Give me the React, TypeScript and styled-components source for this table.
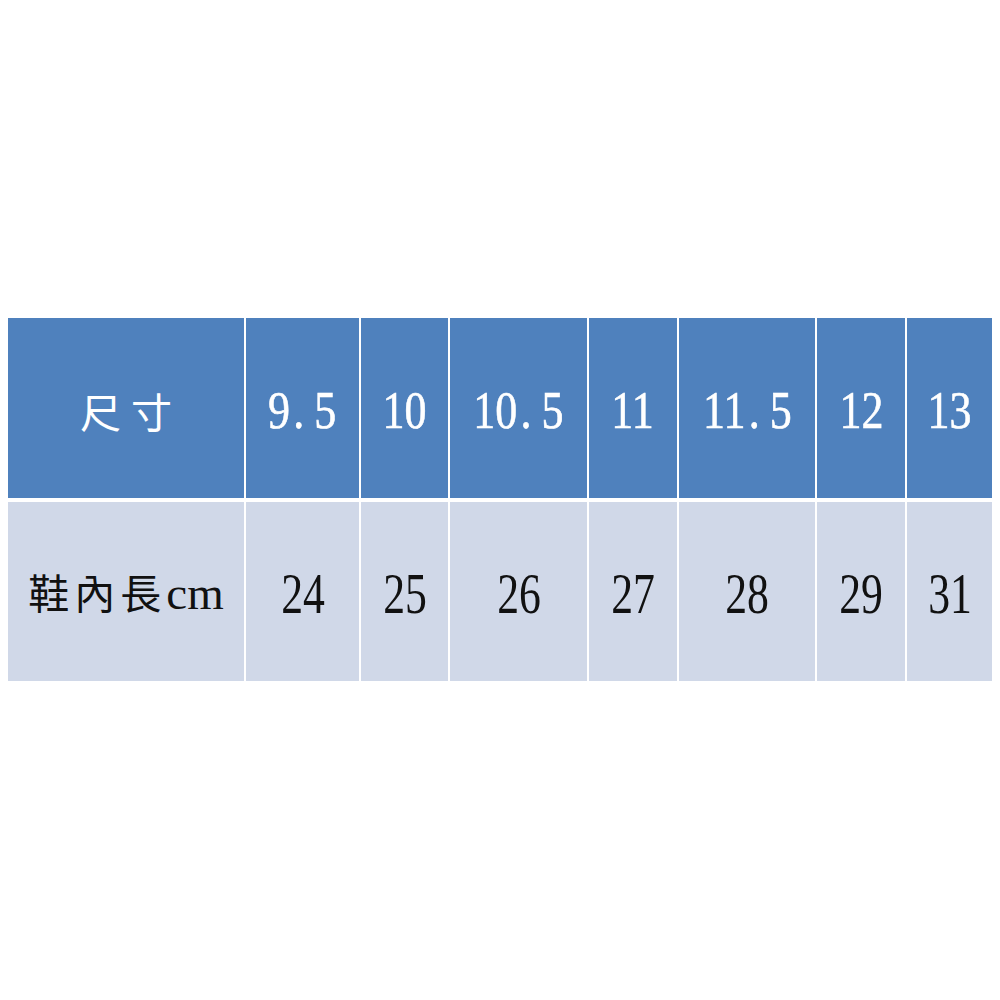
import styled, { createGlobalStyle } from "styled-components";

const GlobalStyle = createGlobalStyle`
  html, body {
    margin: 0;
    padding: 0;
    background: #ffffff;
  }
`;

const Page = styled.div`
  width: 1000px;
  height: 1000px;
  padding: 318px 0 0 8px;
  box-sizing: border-box;
  background: #ffffff;
`;

const SizeGrid = styled.div`
  display: grid;
  grid-template-columns: 236px 113px 87px 137px 88px 136px 88px 85px;
  grid-template-rows: 180px 179px;
  column-gap: 2px;
  row-gap: 4px;
  width: 984px;
`;

interface CellProps {
  $head?: boolean;
}

const Cell = styled.div<CellProps>`
  display: flex;
  align-items: center;
  justify-content: center;
  background: ${(p) => (p.$head ? "#4f81bd" : "#d0d8e8")};
  color: ${(p) => (p.$head ? "#ffffff" : "#111111")};
  font-family: "Liberation Serif", "Noto Sans CJK TC", serif;
  line-height: 1;
  padding-top: 4px;
  white-space: nowrap;
`;

const Digits = styled.span<CellProps>`
  display: inline-block;
  font-size: ${(p) => (p.$head ? "53px" : "56px")};
  transform: scaleX(${(p) => (p.$head ? 0.83 : 0.78)});
  -webkit-text-stroke: ${(p) => (p.$head ? "0.6px #ffffff" : "0")};
`;

const Label = styled.span<CellProps>`
  font-family: "Noto Sans CJK TC", serif;
  font-size: 41px;
  letter-spacing: ${(p) => (p.$head ? "10px" : "5px")};
  margin-right: ${(p) => (p.$head ? "-10px" : "0")};
`;

const Unit = styled.span`
  font-family: "Liberation Serif", serif;
  font-size: 47px;
  letter-spacing: 0;
`;

const Dot = styled.span`
  display: inline-block;
  margin: 0 12px 0 4px;
`;

const sizes = ["9.5", "10", "10.5", "11", "11.5", "12", "13"];
const lengths = ["24", "25", "26", "27", "28", "29", "31"];

function SizeValue({ value }: { value: string }) {
  const [whole, half] = value.split(".");
  if (half === undefined) return <>{whole}</>;
  return (
    <>
      {whole}
      <Dot>.</Dot>
      {half}
    </>
  );
}

export default function App() {
  return (
    <>
      <GlobalStyle />
      <Page>
        <SizeGrid>
          <Cell $head>
            <Label $head>尺寸</Label>
          </Cell>
          {sizes.map((s) => (
            <Cell $head key={s}>
              <Digits $head>
                <SizeValue value={s} />
              </Digits>
            </Cell>
          ))}
          <Cell>
            <Label>
              鞋內長<Unit>cm</Unit>
            </Label>
          </Cell>
          {lengths.map((l) => (
            <Cell key={l}>
              <Digits>{l}</Digits>
            </Cell>
          ))}
        </SizeGrid>
      </Page>
    </>
  );
}
